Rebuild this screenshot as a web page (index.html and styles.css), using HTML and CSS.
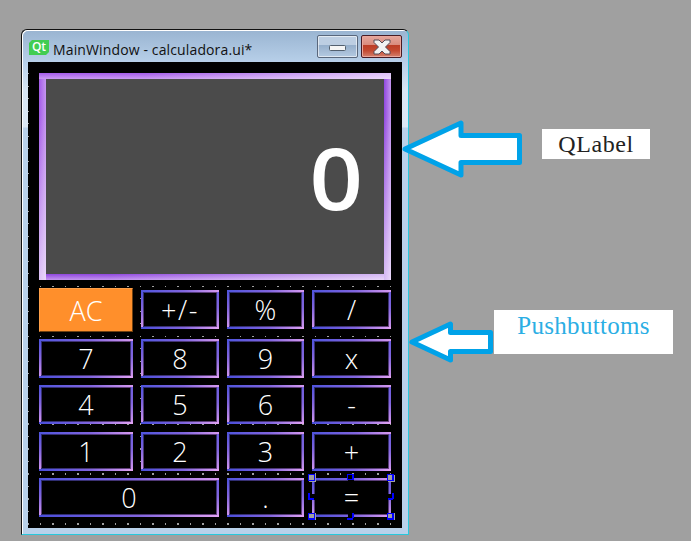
FILE: index.html
```html
<!DOCTYPE html>
<html lang="en">
<head>
<meta charset="utf-8">
<title>Calculator diagram</title>
<link rel="stylesheet" href="styles.css">
</head>
<body>
<div class="window">
  <header class="titlebar">
    <span class="logo"><span class="logo-text">Qt</span></span>
    <span class="title">MainWindow - calculadora.ui*</span>
    <span class="control minimize"><svg width="17" height="6"><rect x=".5" y=".5" width="16" height="5" rx="1" fill="#f5f5f5" stroke="#53606f"/></svg></span>
    <span class="control close"><svg width="18" height="16" viewBox="0 0 18 16"><path d="M1 1H6L9 4L12 1H17V3.500L12.500 8L17 12.500V15H12L9 12L6 15H1V12.500L5.500 8L1 3.500Z" fill="#f2f2f2" stroke="#544a55" stroke-linejoin="round"/></svg></span>
  </header>
  <main class="client">
    <svg class="dots" width="374" height="466" shape-rendering="crispEdges">
      <defs>
        <pattern id="fine" width="25" height="25" patternUnits="userSpaceOnUse"><path d="M0 11h1v1h-1zM12 11h1v1h-1zM24 11h1v1h-1zM0 24h1v1h-1zM12 24h1v1h-1zM24 24h1v1h-1z" fill="#a0a0a0"/></pattern>
        <pattern id="coarse" width="25" height="25" patternUnits="userSpaceOnUse"><path d="M0 11h1v2h-1zM12 11h1v2h-1zM24 11h1v2h-1zM0 24h1v1h-1zM12 24h1v1h-1zM24 24h1v1h-1z" fill="#a0a0a0"/></pattern>
      </defs>
      <rect y="5" width="374" height="350" fill="url(#fine)"/>
      <rect y="355" width="374" height="111" fill="url(#coarse)"/>
    </svg>
    <div class="display"><span class="value">0</span></div>
    <div class="keys">
      <div class="key clear">AC</div><div class="key sign">+/-</div><div class="key">%</div><div class="key">/</div>
      <div class="key">7</div><div class="key">8</div><div class="key">9</div><div class="key">x</div>
      <div class="key">4</div><div class="key">5</div><div class="key">6</div><div class="key">-</div>
      <div class="key">1</div><div class="key">2</div><div class="key">3</div><div class="key">+</div>
      <div class="key zero">0</div><div class="key">.</div>
      <div class="key">=<svg class="handles" width="88" height="48" shape-rendering="crispEdges">
        <g fill="#000"><path d="M40 1h6v6h-6zM1 20h6v6h-6zM80 20h6v6h-6zM40 40h6v6h-6z"/></g>
        <g fill="#a0a0a0"><path d="M1 1h7v7h-7zM80 1h7v7h-7zM1 39h7v7h-7zM80 39h7v7h-7z"/></g>
        <g fill="none" stroke="#00f"><path d="M.5.500h6v6h-6zM79.500.500h6v6h-6zM.5 39.500h6v6h-6zM79.500 39.500h6v6h-6zM39.500.500h6v5h-6z"/></g>
        <g fill="#00f"><path d="M44 0h2v6h-2zM84 1h2v6h-2zM84 40h2v5h-2zM0 19h2v6h-2zM0 24h6v2h-6zM84 19h2v6h-2zM80 24h5v2h-5zM44 39h2v5h-2zM39 44h6v2h-6zM0 44h6v2h-6zM79 44h6v2h-6z"/></g>
      </svg></div>
    </div>
  </main>
</div>
<svg class="arrows" width="691" height="541">
  <g fill="#fff" stroke="#00a2e8" stroke-width="5" stroke-linejoin="round">
    <path d="M405 149L461 123V135.500H519.500V162.500H461V175Z"/>
    <path d="M412 342L450.500 324V332.500H490.500V351.500H450.500V360Z"/>
  </g>
</svg>
<div class="note note-label"><span>QLabel</span></div>
<div class="note note-buttons"><span>Pushbuttoms</span></div>
</body>
</html>
```
FILE: styles.css
```css
* { box-sizing: border-box; }
body {
  margin: 0;
  width: 691px;
  height: 541px;
  padding: 29px 0 0 21px;
  overflow: hidden;
  background: #a0a0a0;
  font-family: "Open Sans", "Noto Sans", sans-serif;
}
.window {
  width: 388px;
  height: 506px;
  padding: 0 6px 6px 5px;
  border: 1px solid #28c8dc;
  border-top-color: #111;
  border-left-color: #111;
  border-radius: 6px 6px 0 0;
  background: linear-gradient(#99b4d1 0, #b9d1ea 34px, #d8e6f4 60px, #dce8f5 97px, #b9d1ea 98px);
  box-shadow: inset 1px 1px #fff;
}
.titlebar {
  display: flex;
  align-items: flex-start;
  width: 375px;
  height: 32px;
  padding: 0 0 0 2px;
}
.logo {
  flex: none;
  width: 20px;
  height: 15px;
  margin-top: 10px;
  background: #41cd52;
  clip-path: polygon(3px 0, 100% 0, 100% 12px, 17px 100%, 0 100%, 0 3px);
  color: #fff;
  font-size: 12px;
  font-weight: 600;
  line-height: 14px;
  text-align: center;
}
.logo-text { display: block; }
.title {
  flex: none;
  width: 264px;
  margin: 9px 0 0 4px;
  color: #111;
  font-size: 14px;
  line-height: 22px;
  letter-spacing: .13px;
  white-space: nowrap;
}
.control {
  display: flex;
  align-items: center;
  justify-content: center;
  flex: none;
  width: 41px;
  height: 23px;
  margin-top: 5px;
  border: 1px solid #59677c;
  border-radius: 2px;
  box-shadow: inset 0 0 0 1px #ffffff90;
  background: linear-gradient(#bdcee2 0 42%, #95aeca 43%, #b4cae2);
}
.minimize { padding-top: 3px; }
.close {
  margin-left: 3px;
  border-color: #481c24;
  box-shadow: inset 0 0 0 1px #e9a79c;
  background: linear-gradient(#e6a79c, #d98b7d 42%, #bb3c25 43%, #c44a31 70%, #d4816d);
}
.client {
  position: relative;
  width: 374px;
  height: 466px;
  margin-left: 1px;
  padding: 11px 11px 0;
  background: #000;
}
.dots { position: absolute; left: 0; top: 0; }
.display {
  position: relative;
  display: flex;
  justify-content: flex-end;
  align-items: center;
  width: 352px;
  height: 207px;
  padding-right: 30px;
  background:
    linear-gradient(90deg, transparent 30%, #ffffffa0) top / 100% 6px no-repeat,
    linear-gradient(#a45be8, #c99bf0) top / 100% 6px no-repeat,
    linear-gradient(transparent 20%, #ffffffa0) left / 7px 100% no-repeat,
    linear-gradient(90deg, #a45be8, #c596ef) left / 7px 100% no-repeat,
    linear-gradient(transparent 20%, #ffffffa0) right / 7px 100% no-repeat,
    linear-gradient(90deg, #9048df, #c596ef) right / 7px 100% no-repeat,
    linear-gradient(90deg, transparent 20%, #ffffffa0) bottom / 100% 6px no-repeat,
    linear-gradient(#9048df, #c596ef) bottom / 100% 6px no-repeat,
    #4b4b4b;
}
.value {
  color: #fff;
  font-size: 85px;
  font-weight: 600;
  line-height: 1;
  transform: translateY(1px) scaleX(1.1);
}
.keys {
  position: relative;
  display: grid;
  grid-template-columns: 94px 78px 77px 79px;
  grid-template-rows: 44px 39px 40px 39px 39px;
  column-gap: 8px;
  row-gap: 7px;
  margin-top: 8px;
}
.key {
  position: relative;
  display: flex;
  align-items: center;
  justify-content: center;
  height: 39px;
  background:
    linear-gradient(90deg, #5055dd, #8065df 55%, #d69af0) top / 100% 2px no-repeat,
    linear-gradient(90deg, #4a4edb, #8065df 55%, #e3a4f3) bottom / 100% 2px no-repeat,
    linear-gradient(#4b50dc, #8065df 45%, #d69af0) left / 2px 100% no-repeat,
    linear-gradient(#6c5cdf, #8065df 45%, #d69af0) right / 2px 100% no-repeat,
    linear-gradient(90deg, #292b70, #66417a) center 2px / 100% 1px no-repeat,
    linear-gradient(90deg, #292b70, #66417a) center 36px / 100% 1px no-repeat,
    linear-gradient(#292b70, #66417a) 2px center / 1px 100% no-repeat,
    linear-gradient(#292b70, #66417a) right 2px center / 1px 100% no-repeat,
    #000;
  color: #fff;
  font-size: 27px;
  font-weight: 300;
  line-height: 37px;
}
.key:nth-child(-n+4) { margin-top: 2px; }
.sign { letter-spacing: 1.5px; }
.key.clear {
  height: 44px;
  margin-top: 0;
  border: 1px solid #ff9f48;
  border-right-color: #70400f;
  border-bottom-color: #70400f;
  background: #ff8f2b;
}
.zero { grid-column: span 2; }
.handles { position: absolute; left: -4px; top: -4px; }
.arrows { position: absolute; left: 0; top: 0; }
.note {
  position: absolute;
  background: #fff;
  font-family: "Liberation Serif", serif;
  text-align: center;
  white-space: nowrap;
}
.note-label {
  left: 542px;
  top: 129px;
  width: 108px;
  height: 30px;
  color: #222;
  font-size: 24px;
  line-height: 31px;
  letter-spacing: .6px;
}
.note-buttons {
  left: 494px;
  top: 310px;
  width: 179px;
  height: 44px;
  color: #2baee4;
  font-size: 25px;
  line-height: 31px;
  letter-spacing: .3px;
}
```
